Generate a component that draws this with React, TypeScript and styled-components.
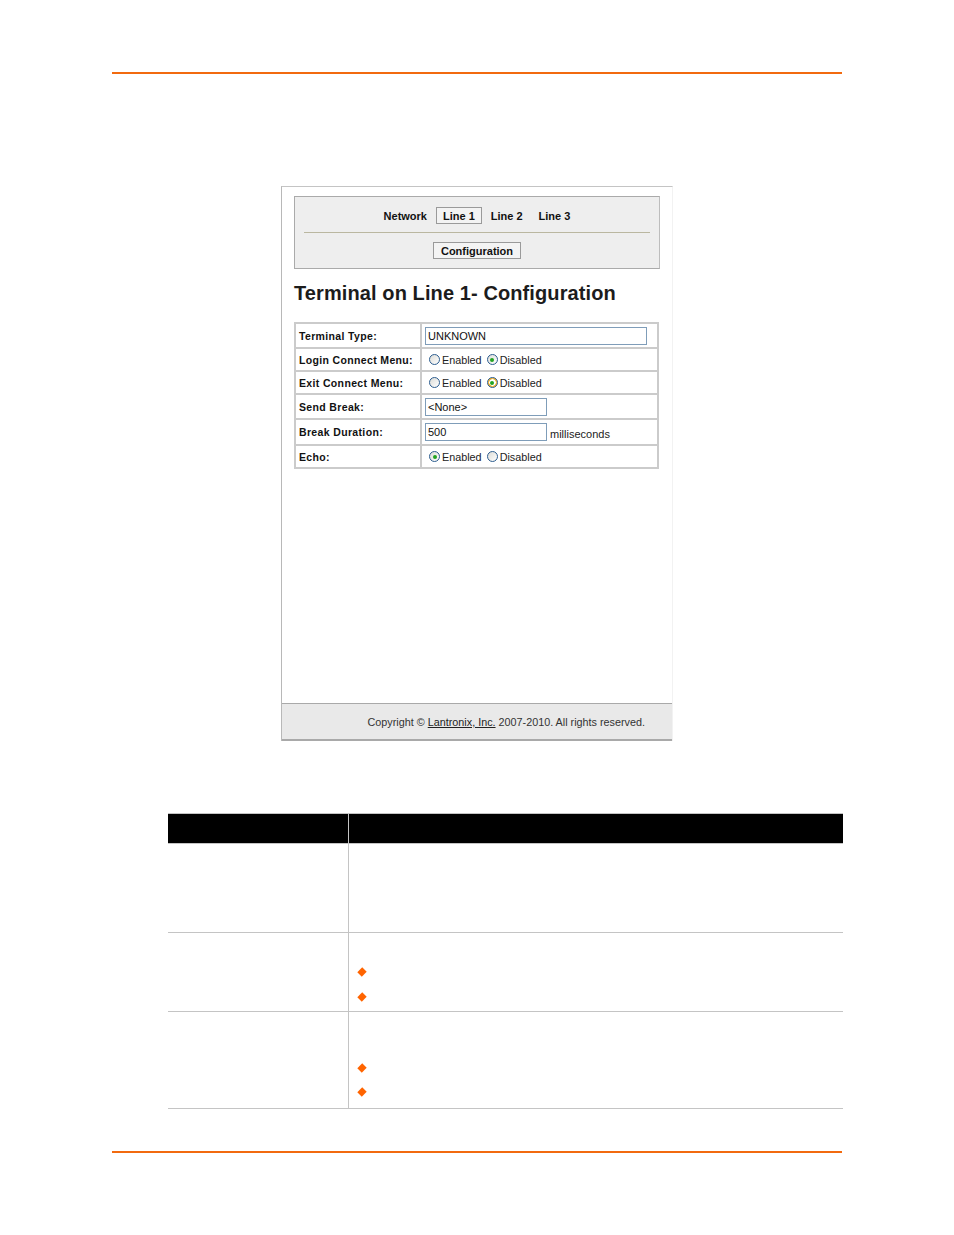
import { createGlobalStyle, styled } from "styled-components";

const GlobalStyle = createGlobalStyle`
  html, body {
    margin: 0;
    padding: 0;
    background: #ffffff;
  }
  body {
    font-family: "Liberation Sans", Arial, sans-serif;
    color: #000;
  }
`;

const Page = styled.div`
  width: 954px;
  min-height: 1235px;
  padding-top: 72px;
  box-sizing: border-box;
  display: flex;
  flex-direction: column;
`;

const Rule = styled.div<{ $top: number }>`
  margin: ${(p) => p.$top}px 0 0 112px;
  width: 730px;
  height: 2px;
  background: #f26a0f;
`;

/* screenshot of the web manager */
const Frame = styled.div`
  margin: 112px 0 0 281px;
  width: 392px;
  height: 555px;
  box-sizing: border-box;
  border-top: 1px solid #c4c4c4;
  border-left: 1px solid #b8b8b8;
  border-right: 1px solid #f2f2f2;
  display: flex;
  flex-direction: column;
`;

const FrameBody = styled.div`
  flex: 1;
  padding: 9px 0 0 12px;
  display: flex;
  flex-direction: column;
`;

const NavBox = styled.div`
  width: 366px;
  box-sizing: border-box;
  background: #eeeeee;
  border: 1px solid #aaaaaa;
  border-right-color: #bdbdbd;
  padding: 10px 9px 9px;
`;

const NavRow = styled.div`
  display: flex;
  justify-content: center;
  gap: 2px;
`;

const NavItem = styled.span<{ $active?: boolean }>`
  display: inline-flex;
  align-items: center;
  height: 17px;
  padding: 0 6px;
  box-sizing: border-box;
  font-size: 11px;
  font-weight: bold;
  color: #111;
  border: 1px solid ${(p) => (p.$active ? "#9a9a9a" : "transparent")};
  background: ${(p) => (p.$active ? "#f3f3f3" : "transparent")};
`;

const NavSeparator = styled.div`
  height: 1px;
  background: #bab7a0;
  margin: 8px 0 9px;
`;

const ButtonRow = styled.div`
  display: flex;
  justify-content: center;
`;

const NavButton = styled.span`
  display: inline-flex;
  align-items: center;
  height: 17px;
  padding: 0 7px;
  box-sizing: border-box;
  font-size: 11px;
  font-weight: bold;
  color: #111;
  border: 1px solid #9a9a9a;
  background: #f4f4f4;
`;

const Title = styled.h1`
  margin: 12px 0 0 0;
  font-size: 20px;
  line-height: 24px;
  font-weight: bold;
  letter-spacing: 0.1px;
  color: #1c1c1c;
`;

const FormGrid = styled.div`
  margin-top: 17px;
  width: 365px;
  box-sizing: border-box;
  display: grid;
  grid-template-columns: 124px 1fr;
  grid-template-rows: 23px 21px 21px 23px 24px 21px;
  gap: 2px;
  padding: 2px;
  background: #cbcbcb;
`;

const Label = styled.div`
  background: #fff;
  display: flex;
  align-items: center;
  padding-left: 3px;
  font-size: 10.5px;
  font-weight: bold;
  letter-spacing: 0.35px;
  color: #111;
  white-space: nowrap;
`;

const Value = styled.div`
  background: #fff;
  display: flex;
  align-items: center;
  padding-left: 3px;
  font-size: 11px;
  color: #222;
`;

const TextBox = styled.div<{ $w: number }>`
  width: ${(p) => p.$w}px;
  height: 18px;
  box-sizing: border-box;
  border: 1px solid #7f9db9;
  padding-left: 2px;
  display: flex;
  align-items: center;
  font-size: 11px;
  color: #111;
`;

const Unit = styled.span`
  margin-left: 3px;
  padding-top: 3px;
`;

const RadioGroup = styled.div`
  display: flex;
  align-items: center;
  gap: 5px;
  padding-left: 4px;
`;

const RadioOption = styled.label`
  display: inline-flex;
  align-items: center;
  gap: 2px;
  font-size: 10.8px;
`;

const RadioDot = styled.span<{ $checked?: boolean; $hot?: boolean }>`
  width: 11px;
  height: 11px;
  box-sizing: border-box;
  border-radius: 50%;
  border: 1px solid #2c5d8f;
  background: ${(p) =>
    p.$hot
      ? "radial-gradient(circle, #fff 0 3px, #f6b93b 3.5px)"
      : "linear-gradient(135deg, #dcdcd7, #ffffff)"};
  display: inline-flex;
  align-items: center;
  justify-content: center;

  &::after {
    content: "";
    width: 4px;
    height: 4px;
    border-radius: 50%;
    background: ${(p) => (p.$checked ? "#22a322" : "transparent")};
  }
`;

const Radio = ({
  on,
  hot,
}: {
  on: "Enabled" | "Disabled";
  hot?: "Enabled" | "Disabled";
}) => (
  <RadioGroup>
    {(["Enabled", "Disabled"] as const).map((opt) => (
      <RadioOption key={opt}>
        <RadioDot $checked={on === opt} $hot={hot === opt} />
        {opt}
      </RadioOption>
    ))}
  </RadioGroup>
);

const Spacer = styled.div`
  flex: 1;
`;

const Footer = styled.div`
  height: 38px;
  box-sizing: border-box;
  border-top: 1px solid #a9a9a9;
  border-bottom: 2px solid #a9a9a9;
  background: #e9e9e9;
  display: flex;
  align-items: center;
  justify-content: flex-end;
  padding: 0 27px 0 0;
  font-size: 10.8px;
  color: #333;
`;

const FooterLink = styled.span`
  text-decoration: underline;
  color: #222;
`;

/* parameter table below the figure */
const SpecTable = styled.div`
  margin: 72px 0 0 168px;
  width: 675px;
  border-top: 1px solid #c4c4c4;
`;

const SpecHead = styled.div`
  display: grid;
  grid-template-columns: 181px 1fr;
  height: 30px;
  box-sizing: border-box;
  background: #000;
  border-bottom: 1px solid #c4c4c4;
`;

const SpecRow = styled.div<{ $h: number }>`
  display: grid;
  grid-template-columns: 181px 1fr;
  height: ${(p) => p.$h}px;
  box-sizing: border-box;
  border-bottom: 1px solid #c4c4c4;
`;

const SpecName = styled.div`
  border-right: 1px solid #c4c4c4;
`;

const SpecText = styled.div<{ $pt: number }>`
  padding: ${(p) => p.$pt}px 0 0 9px;
`;

const Bullet = styled.div<{ $h: number }>`
  height: ${(p) => p.$h}px;
  display: flex;
  align-items: center;
`;

const Diamond = styled.span`
  width: 6px;
  height: 6px;
  margin-left: 1px;
  background: #ff6400;
  transform: rotate(45deg) scale(1.05, 1.15);
`;

export default function App() {
  return (
    <Page>
      <GlobalStyle />
      <Rule $top={0} />

      <Frame>
        <FrameBody>
          <NavBox>
            <NavRow>
              <NavItem>Network</NavItem>
              <NavItem $active>Line 1</NavItem>
              <NavItem>Line 2</NavItem>
              <NavItem>Line 3</NavItem>
            </NavRow>
            <NavSeparator />
            <ButtonRow>
              <NavButton>Configuration</NavButton>
            </ButtonRow>
          </NavBox>

          <Title>Terminal on Line 1- Configuration</Title>

          <FormGrid>
            <Label>Terminal Type:</Label>
            <Value>
              <TextBox $w={222}>UNKNOWN</TextBox>
            </Value>
            <Label>Login Connect Menu:</Label>
            <Value>
              <Radio on="Disabled" />
            </Value>
            <Label>Exit Connect Menu:</Label>
            <Value>
              <Radio on="Disabled" hot="Disabled" />
            </Value>
            <Label>Send Break:</Label>
            <Value>
              <TextBox $w={122}>&lt;None&gt;</TextBox>
            </Value>
            <Label>Break Duration:</Label>
            <Value>
              <TextBox $w={122}>500</TextBox>
              <Unit>milliseconds</Unit>
            </Value>
            <Label>Echo:</Label>
            <Value>
              <Radio on="Enabled" />
            </Value>
          </FormGrid>
          <Spacer />
        </FrameBody>
        <Footer>
          Copyright ©&nbsp;<FooterLink>Lantronix, Inc.</FooterLink>&nbsp;2007-2010. All
          rights reserved.
        </Footer>
      </Frame>

      <SpecTable>
        <SpecHead>
          <SpecName />
          <div />
        </SpecHead>
        <SpecRow $h={89}>
          <SpecName />
          <SpecText $pt={0} />
        </SpecRow>
        <SpecRow $h={79}>
          <SpecName />
          <SpecText $pt={26}>
            <Bullet $h={25}>
              <Diamond />
            </Bullet>
            <Bullet $h={25}>
              <Diamond />
            </Bullet>
          </SpecText>
        </SpecRow>
        <SpecRow $h={97}>
          <SpecName />
          <SpecText $pt={44}>
            <Bullet $h={24}>
              <Diamond />
            </Bullet>
            <Bullet $h={24}>
              <Diamond />
            </Bullet>
          </SpecText>
        </SpecRow>
      </SpecTable>

      <Rule $top={42} />
    </Page>
  );
}
